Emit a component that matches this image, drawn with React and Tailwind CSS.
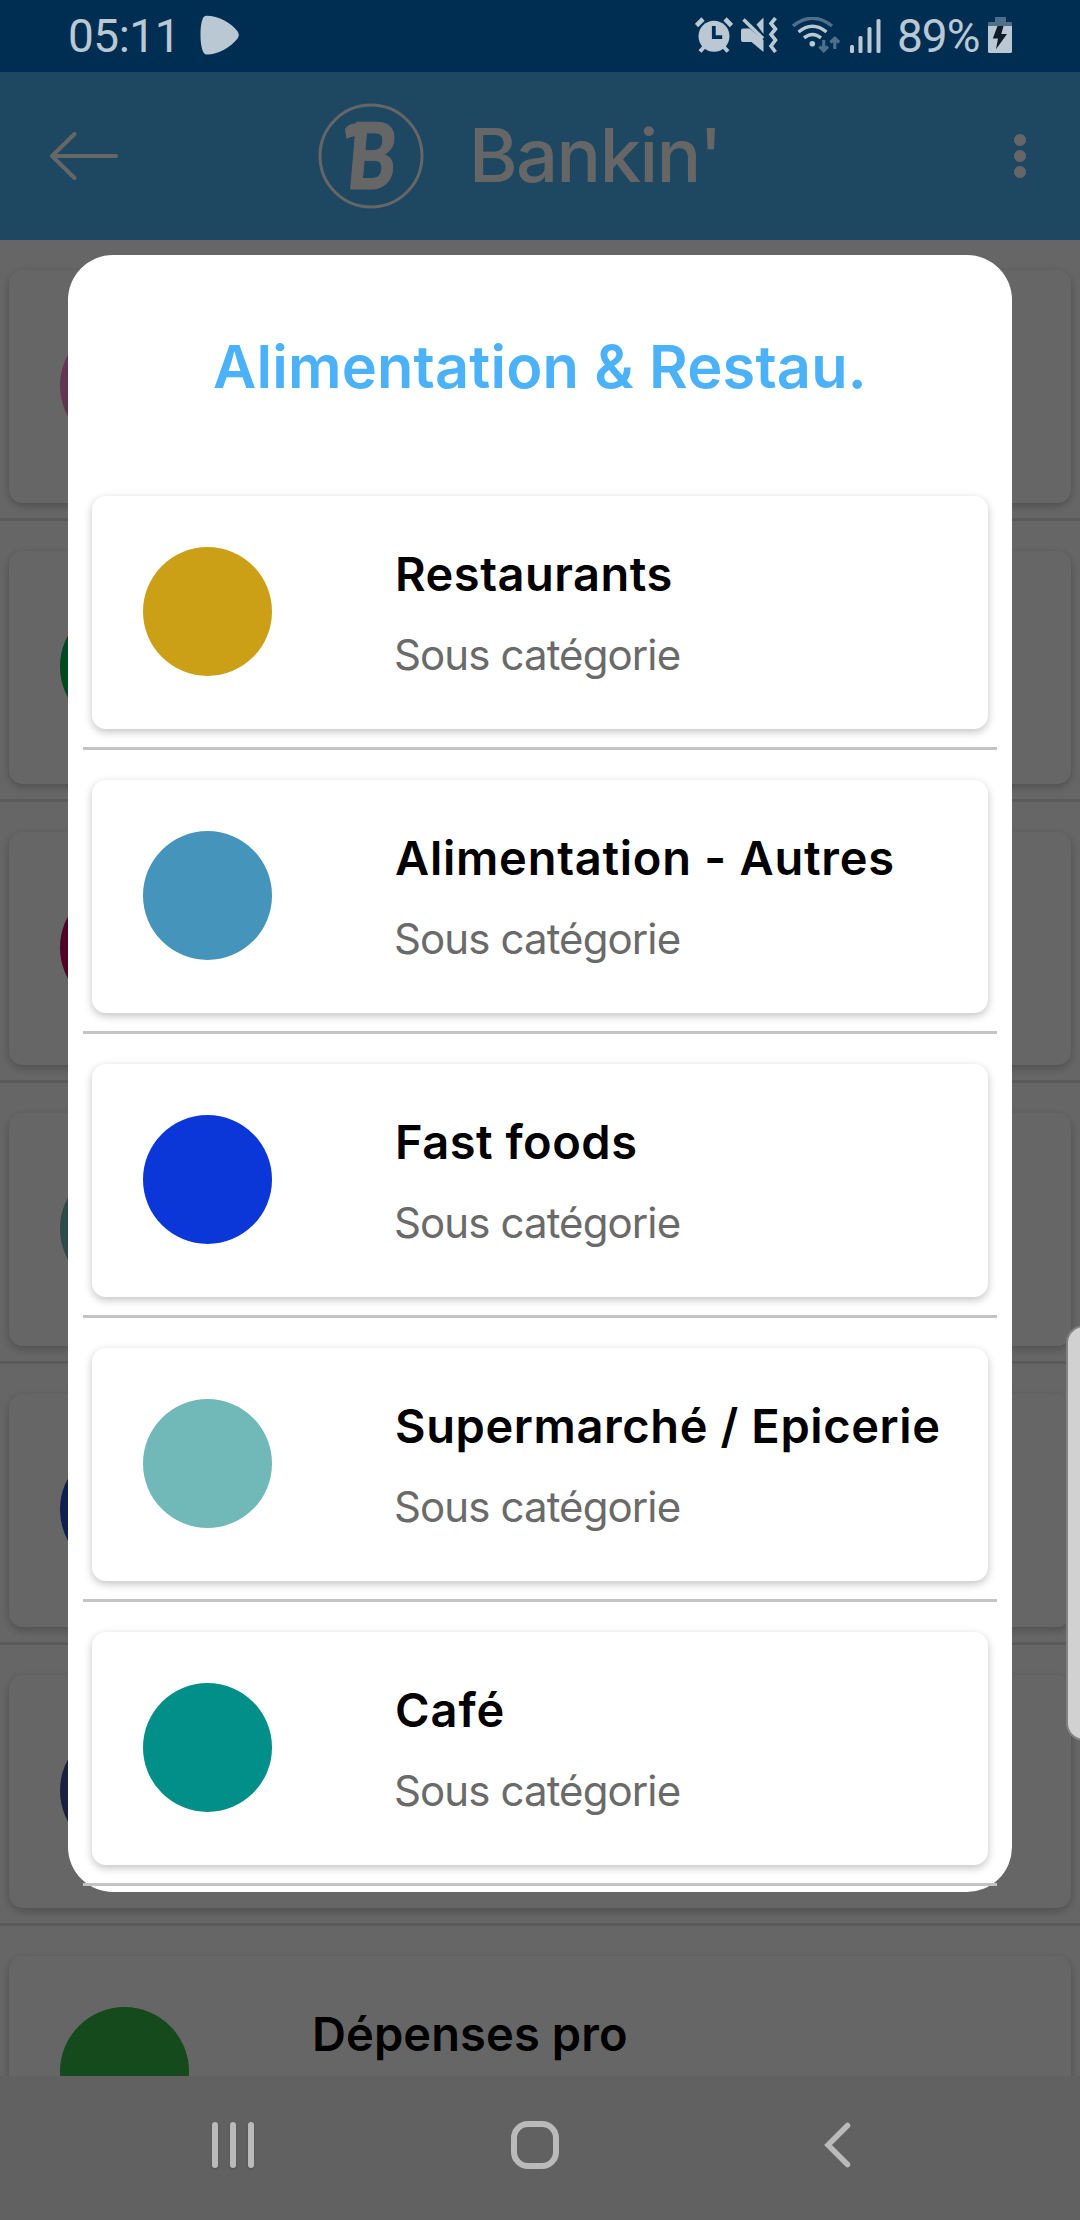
const backgroundCategories = [
  { name: "", color: "bg-[#f587cd]" },
  { name: "", color: "bg-[#00b450]" },
  { name: "", color: "bg-[#c80a5f]" },
  { name: "", color: "bg-[#70b9b8]" },
  { name: "", color: "bg-[#2350c8]" },
  { name: "", color: "bg-[#3c55a0]" },
  { name: "Dépenses pro", color: "bg-[#32b946]", tracking: "tracking-[0.1px]" },
];

const subCategories = [
  { name: "Restaurants", color: "bg-[#cca016]", tracking: "tracking-[0.5px]" },
  { name: "Alimentation - Autres", color: "bg-[#4594bc]", tracking: "tracking-[0.75px]" },
  { name: "Fast foods", color: "bg-[#0b37d9]", tracking: "tracking-[0.5px]" },
  { name: "Supermarché / Epicerie", color: "bg-[#70b9b8]", tracking: "tracking-[0.6px]" },
  { name: "Café", color: "bg-[#028f8a]", tracking: "tracking-[0.9px]" },
];

function AlarmIcon() {
  return (
    <svg className="h-9 w-[38px]" viewBox="695 17 38 36" fill="none" stroke="#bac8d3">
      <circle cx="714" cy="36.3" r="15.5" fill="#bac8d3" stroke="none" />
      <path d="M713.8 26v11.2h8.4" stroke="#002e52" strokeWidth="3.8" />
      <path d="M696.5 25.5l6.5-6.5M731.5 25.5l-6.5-6.5" strokeWidth="4.6" />
      <path d="M705 46l-5 5.5M723 46l5 5.5" strokeWidth="4" />
    </svg>
  );
}

function MuteVibrateIcon() {
  return (
    <svg className="ml-[7px] h-9 w-[38px]" viewBox="740 17 38 36" fill="#bac8d3">
      <path d="M741 30.5q0-2 2-2h6.5L763.5 40V52L751.5 42H743q-2 0-2-2z" />
      <path d="M763.5 17.5V34L756.5 24.5z" />
      <path d="M743.5 19.5L763 38.500" stroke="#bac8d3" strokeWidth="3.6" />
      <path
        d="M775.5 18l-4.500 5.500 4.500 5.500-4.500 5.500 4.500 5.500-4.500 6 4.500 6"
        fill="none"
        stroke="#bac8d3"
        strokeWidth="3.6"
      />
    </svg>
  );
}

function WifiIcon() {
  return (
    <svg className="ml-[13px] h-9 w-[50px]" viewBox="791 17 50 36" fill="none" stroke="#bac8d3" strokeWidth="3.4">
      <path d="M793 26q19.500-15.500 39 0" stroke="#4d6f8a" />
      <path d="M798.500 32q14-11.500 28 0" />
      <path d="M804 37.800q8.500-6.800 17 0" />
      <circle cx="812.3" cy="43.7" r="2.8" fill="#bac8d3" stroke="none" />
      <path
        d="M823.700 40v10.500M819.500 46.500l4.200 4.200 4.200-4.200M834.800 49V38.500M830.500 42.500l4.300-4.300 4.300 4.300"
        stroke="#4d6f8a"
        strokeWidth="3.2"
      />
    </svg>
  );
}

function SignalIcon() {
  return (
    <svg className="ml-2 h-9 w-8" viewBox="849 17 32 36" fill="#bac8d3">
      <rect x="850" y="45" width="4" height="8" rx="1.5" />
      <rect x="858.5" y="36" width="4" height="17" rx="1.5" />
      <rect x="867.5" y="27" width="4" height="26" rx="1.5" />
      <rect x="876.5" y="19" width="4" height="34" rx="1.5" />
    </svg>
  );
}

function BatteryIcon() {
  return (
    <svg className="h-9 w-6" viewBox="988 17 24 36">
      <path d="M988 26v-3q0-1 1-1h6v-5h11v5h5q1 0 1 1v3z" fill="#4d6f8a" />
      <path d="M988 26h24v25.500q0 1.500-1.500 1.500h-21q-1.500 0-1.500-1.500z" fill="#bac8d3" />
      <path d="M997.500 26h6l-2.200 8h5.700l-11 15.200 2-10.700h-5.200z" fill="#101c26" />
    </svg>
  );
}

function StatusBar() {
  return (
    <div className="flex h-[72px] shrink-0 items-start bg-[#002e52] px-[68px] font-[Roboto,sans-serif] text-[46px] text-[#bac8d3]">
      <span className="w-[131px] pt-[9px] leading-[54px] tracking-[-0.5px]">05:11</span>
      <svg className="ml-px mt-[15px] h-10 w-10" viewBox="0 0 40 40" fill="#bac8d3">
        <path d="M6 .7C18 .5 32 8 38 17q1.800 3 0 6C31 32 18 39.500 7 39.600 2.500 40 .5 30 .5 20S2 .7 6 .7z" />
      </svg>
      <div className="ml-auto flex pt-[17px]">
        <AlarmIcon />
        <MuteVibrateIcon />
        <WifiIcon />
        <SignalIcon />
        <span className="-mt-2 ml-4 w-[91px] leading-[54px] tracking-[-1px]">89%</span>
        <BatteryIcon />
      </div>
    </div>
  );
}

function Header() {
  return (
    <header className="flex h-[168px] shrink-0 items-center bg-[#4db2f4] pl-[49px] pr-[54px]">
      <svg className="h-12 w-[70px]" viewBox="0 0 70 48" fill="none" stroke="#fff" strokeWidth="4" strokeLinecap="round" strokeLinejoin="round">
        <path d="M25.5 2L3 24l22.500 22M4 24h63" />
      </svg>
      <svg className="ml-[199px] h-[106px] w-[106px] overflow-visible" viewBox="0 0 106 106">
        <circle cx="53" cy="53" r="51" fill="none" stroke="#fff" strokeWidth="3" />
        <text
          transform="translate(27 86) skewX(-5) scale(.8 1)"
          fill="#fff"
          stroke="#fff"
          strokeWidth="1"
          fontFamily="Lato, sans-serif"
          fontWeight="900"
          fontSize="92"
        >
          B
        </text>
        <path d="M27 26q3-6 14-6v13q-8 0-12.500 3z" fill="#fff" />
      </svg>
      <h1 className="ml-[45px] pb-0.5 text-[74px] font-medium leading-[84px] tracking-[-1.5px] text-white">Bankin'</h1>
      <div className="ml-auto flex flex-col gap-1">
        <span className="size-3 rounded-full bg-white" />
        <span className="size-3 rounded-full bg-white" />
        <span className="size-3 rounded-full bg-white" />
      </div>
    </header>
  );
}

function CategoryCard({ name, subtitle, color, tracking = "" }) {
  return (
    <div className="flex h-[233px] rounded-[14px] bg-white pl-[51px] shadow-[0_3px_9px_rgba(0,0,0,0.24)]">
      <div className={`mt-[51px] size-[129px] shrink-0 rounded-full ${color}`} />
      <div className="ml-[123px] flex flex-col gap-7 whitespace-nowrap pt-[50px]">
        <span className={`text-[47px] font-semibold leading-[56px] text-black ${tracking}`}>{name}</span>
        {subtitle && (
          <span className="-ml-px text-[42px] leading-[50px] tracking-[-0.9px] text-[#6a6a6a]">{subtitle}</span>
        )}
      </div>
    </div>
  );
}

function NavigationBar() {
  return (
    <nav className="flex h-36 shrink-0 items-start bg-[#616161] pl-[212px] pt-[45px]">
      <div className="mt-px flex h-[46px] gap-3">
        <span className="w-1.5 rounded-full bg-[#bababa] shadow-[0_1px_2px_rgba(0,0,0,0.2)]" />
        <span className="w-1.5 rounded-full bg-[#bababa] shadow-[0_1px_2px_rgba(0,0,0,0.2)]" />
        <span className="w-1.5 rounded-full bg-[#bababa] shadow-[0_1px_2px_rgba(0,0,0,0.2)]" />
      </div>
      <span className="ml-[257px] size-12 rounded-[17px] border-[6px] border-[#bababa]" />
      <svg className="ml-[264px] h-12 w-7" viewBox="0 0 28 48" fill="none" stroke="#bababa" strokeWidth="5.5" strokeLinecap="round">
        <path d="M24.500 4.500L5 24l19.500 19.500" />
      </svg>
    </nav>
  );
}

function Dialog() {
  return (
    <section className="h-[1637px] w-[944px] rounded-[45px] bg-white pt-[75px]">
      <h2 className="text-center text-[59.5px] font-semibold leading-[72px] tracking-[0.15px] text-[#4bb1f8]">
        Alimentation & Restau.
      </h2>
      <div className="mx-[15px] mt-[94px] flex flex-col gap-[30px]">
        {subCategories.map((category) => (
          <div key={category.name} className="border-b-[3px] border-[#c4c4c4] px-[9px] pb-[18px]">
            <CategoryCard {...category} subtitle="Sous catégorie" />
          </div>
        ))}
      </div>
    </section>
  );
}

export default function App() {
  return (
    <div className="relative flex h-[2220px] w-[1080px] flex-col overflow-hidden bg-white font-[Inter,sans-serif]">
      <StatusBar />
      <Header />
      <main className="flex min-h-0 flex-1 flex-col gap-[30px] overflow-hidden pt-[30px]">
        {backgroundCategories.map((category, index) => (
          <div key={index} className="shrink-0 border-b-[3px] border-[#e2e2e2] px-[9px] pb-[15px]">
            <CategoryCard {...category} />
          </div>
        ))}
      </main>
      <NavigationBar />
      <div className="absolute inset-x-0 bottom-36 top-[72px] flex justify-center bg-black/60 pt-[183px]">
        <Dialog />
      </div>
      <div className="absolute -right-1 top-[1325px] h-[416px] w-[18px] rounded-l-[18px] border-2 border-r-0 border-[#828282] bg-[#d1d1d1]" />
    </div>
  );
}
